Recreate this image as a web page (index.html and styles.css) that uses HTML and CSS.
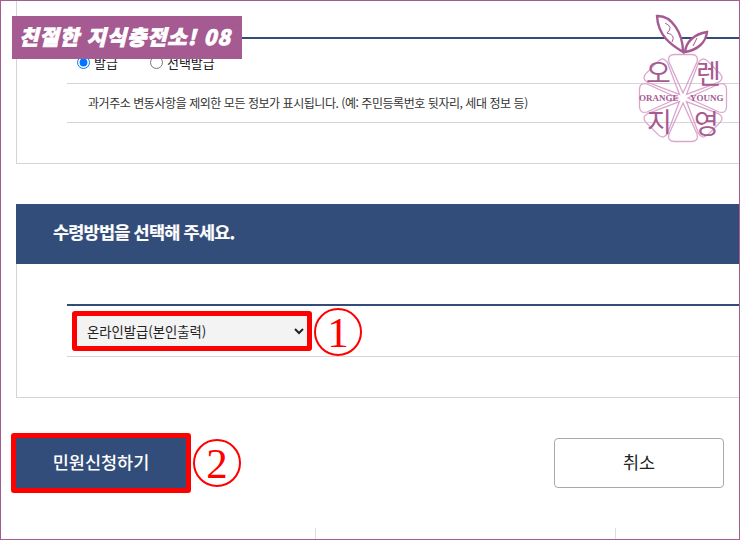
FILE: index.html
```html
<!DOCTYPE html>
<html lang="ko">
<head>
<meta charset="utf-8">
<title>수령방법 선택</title>
<link rel="stylesheet" href="styles.css">
</head>
<body>
<div class="frame">
  <section class="panel panel-top">
    <div class="table">
      <div class="row row-radio">
        <label class="radio-label"><input type="radio" name="kind" checked>발급</label>
        <label class="radio-label"><input type="radio" name="kind">선택발급</label>
      </div>
      <div class="row row-note">과거주소 변동사항을 제외한 모든 정보가 표시됩니다. (예: 주민등록번호 뒷자리, 세대 정보 등)</div>
    </div>
  </section>

  <h2 class="section-title">수령방법을 선택해 주세요.</h2>
  <section class="panel panel-select">
    <div class="table">
      <div class="row row-select">
        <select class="method">
          <option>온라인발급(본인출력)</option>
        </select>
      </div>
    </div>
  </section>

  <div class="actions">
    <button class="btn btn-primary" type="button">민원신청하기</button>
    <button class="btn btn-cancel" type="button">취소</button>
  </div>

  <div class="footer">
    <div class="footer-cell"></div>
    <div class="footer-cell"></div>
  </div>

  <div class="banner">친절한 지식충전소! 08</div>

  <svg class="mark mark-one" width="50" height="50" viewBox="0 0 50 50">
    <circle class="mark-ring" cx="25" cy="25" r="23"/>
    <text class="mark-num" x="25" y="40" text-anchor="middle">1</text>
  </svg>
  <svg class="mark mark-two" width="50" height="50" viewBox="0 0 50 50">
    <circle class="mark-ring" cx="25" cy="25" r="23"/>
    <text class="mark-num" x="25" y="40" text-anchor="middle">2</text>
  </svg>

  <svg class="logo" width="120" height="160" viewBox="0 0 120 160">
    <defs>
      <path id="petal" class="petal-line" d="M0 -5 L-14 -36 Q-16 -43 -9 -43.500 L9 -43.500 Q16 -43 14 -36 Z"/>
    </defs>
    <g transform="translate(63 98)">
      <use href="#petal"/>
      <use href="#petal" transform="rotate(45)"/>
      <use href="#petal" transform="rotate(90)"/>
      <use href="#petal" transform="rotate(135)"/>
      <use href="#petal" transform="rotate(180)"/>
      <use href="#petal" transform="rotate(225)"/>
      <use href="#petal" transform="rotate(270)"/>
      <use href="#petal" transform="rotate(315)"/>
    </g>
    <path class="leaf" d="M63 52 C55 47 38 38 37 16 C52 15 63 34 63 52 Z"/>
    <path class="leaf-vein" d="M45 23 Q54 27 47 33 Q56 35 52 42"/>
    <path class="leaf" d="M65 52 C66 42 74 34 87 32 C86 42 78 50 65 52 Z"/>
    <path class="leaf-vein" d="M77 38 L73 46"/>
    <text class="logo-ko" x="26" y="83">오</text>
    <text class="logo-ko" x="76" y="84">렌</text>
    <text class="logo-ko" x="27" y="132">지</text>
    <text class="logo-ko" x="74" y="134">영</text>
    <text class="logo-en" x="19" y="101">ORANGE</text>
    <text class="logo-en" x="70" y="101">YOUNG</text>
  </svg>
</div>
</body>
</html>
```
FILE: styles.css
```css
* { box-sizing: border-box; }
html, body { margin: 0; padding: 0; background: #fff; }
body { font-family: "Noto Sans CJK KR", "Noto Sans", sans-serif; color: #222; }

.frame {
  position: relative;
  width: 740px;
  height: 540px;
  overflow: hidden;
  border: 1px solid #a65a92;
}

.panel {
  margin-left: 15px;
  border-left: 1px solid #d5d5d5;
  border-bottom: 1px solid #d5d5d5;
  padding-left: 50px;
}
.panel-top { height: 163px; padding-top: 36px; }
.panel-select { height: 134px; padding-top: 40px; }

.table { border-top: 2px solid #334d7a; }
.row { border-bottom: 1px solid #d5d5d5; }

.row-radio {
  height: 45px;
  display: flex;
  align-items: center;
  gap: 32px;
  padding: 2px 0 0 10px;
  font-size: 13px;
}
.radio-label { display: flex; align-items: center; gap: 4px; }
.radio-label input { margin: 0; width: 13px; height: 13px; }

.row-note {
  height: 39px;
  padding-left: 21px;
  font-size: 12px;
  line-height: 37px;
  letter-spacing: -0.45px;
  color: #333;
  white-space: nowrap;
}

.section-title {
  margin: 40px 0 0 15px;
  height: 60px;
  padding-left: 37px;
  background: #334d7a;
  color: #fff;
  font-size: 17.5px;
  font-weight: 700;
  line-height: 56px;
  letter-spacing: -0.8px;
  -webkit-text-stroke: 0.2px #fff;
}

.row-select { height: 51px; padding: 5px 0 0 5px; }
.method {
  display: block;
  width: 240px;
  height: 40px;
  padding-left: 6px;
  border: 5px solid #f00;
  border-radius: 3px;
  background: #f3f3f3;
  color: #222;
  font-family: "Noto Sans CJK KR", sans-serif;
  font-size: 13.33px;
}

.actions {
  display: flex;
  justify-content: space-between;
  align-items: center;
  margin-top: 40px;
  padding: 0 15px;
}
.btn {
  height: 50px;
  font-family: "Noto Sans CJK KR", sans-serif;
  font-size: 17.5px;
  padding: 0 0 3px;
}
.btn-primary {
  width: 180px;
  height: 60px;
  margin: -5px;
  border: 5px solid #f00;
  border-radius: 3px;
  background: #334d7a;
  color: #fff;
  font-weight: 500;
}
.btn-cancel {
  width: 170px;
  border: 1px solid #aaa;
  border-radius: 4px;
  background: #fff;
  color: #222;
}

.footer { display: flex; margin: 40px 0 0 15px; }
.footer-cell { width: 300px; height: 20px; border-right: 1px solid #ddd; }

.banner {
  position: absolute;
  left: 11px;
  top: 15px;
  width: 230px;
  height: 43px;
  padding-left: 7px;
  background: #a65a92;
  color: #fff;
  font-size: 21px;
  font-weight: 900;
  font-style: italic;
  line-height: 41px;
  letter-spacing: 0.9px;
  -webkit-text-stroke: 0.8px #fff;
  white-space: nowrap;
}

.mark { position: absolute; }
.mark-one { left: 312px; top: 306px; }
.mark-two { left: 191px; top: 437px; }
.mark-ring { fill: none; stroke: #f00; stroke-width: 2; }
.mark-num { fill: #f00; font-family: "Liberation Serif", serif; font-size: 43px; }

.logo { position: absolute; left: 619px; top: -1px; }
.petal-line { fill: none; stroke: #d9a6cc; stroke-width: 1.3; }
.leaf { fill: #fff; stroke: #a65a92; stroke-width: 2.4; }
.leaf-vein { fill: none; stroke: #a65a92; stroke-width: 1; }
.logo-ko { fill: #a65a92; font-family: "Noto Sans CJK KR", sans-serif; font-size: 27px; }
.logo-en { fill: #a65a92; font-family: "Liberation Serif", serif; font-size: 9px; font-weight: 700; }
```
